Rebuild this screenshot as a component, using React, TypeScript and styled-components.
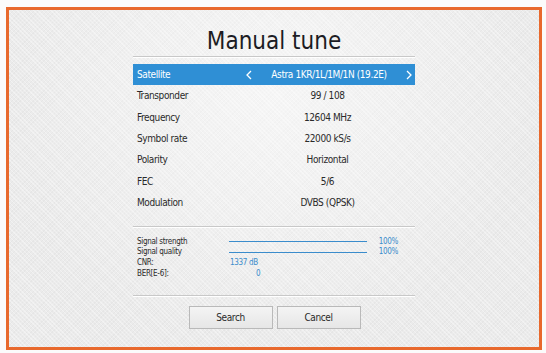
import React from 'react';
import styled, { createGlobalStyle } from 'styled-components';

const FONT = `"DejaVu Sans Condensed", "DejaVu Sans", sans-serif`;

const Global = createGlobalStyle`
  html, body { margin: 0; padding: 0; background: #fbfbfb; }
  body { width: 546px; height: 353px; overflow: hidden; font-family: ${FONT}; }
`;

const Page = styled.div`
  padding: 7px 0 0 6px;
`;

const Frame = styled.div`
  width: 536px;
  height: 343px;
  box-sizing: border-box;
  border: 3px solid #e8692d;
  background-color: #ebebeb;
  background-image:
    radial-gradient(ellipse at 50% 25%, rgba(255, 255, 255, 0.55), rgba(255, 255, 255, 0) 70%),
    repeating-linear-gradient(45deg, rgba(255, 255, 255, 0.35) 0 1px, rgba(255, 255, 255, 0) 1px 3px),
    repeating-linear-gradient(-45deg, rgba(0, 0, 0, 0.025) 0 1px, rgba(0, 0, 0, 0) 1px 3px);
  display: flex;
  flex-direction: column;
  align-items: center;
`;

const Panel = styled.div`
  width: 282px;
  display: flex;
  flex-direction: column;
`;

const Title = styled.h1`
  margin: 0;
  padding-top: 16px;
  height: 30px;
  line-height: 30px;
  font-size: 24px;
  font-weight: 400;
  text-align: center;
  color: #1c1c24;
  border-bottom: 1px solid #c8c8c8;
  box-shadow: 0 1px 0 #ffffff;
`;

const Rows = styled.div`
  margin-top: 7px;
  display: flex;
  flex-direction: column;
`;

const Row = styled.div<{ $selected?: boolean }>`
  display: grid;
  grid-template-columns: 107px 1fr;
  height: 21.33px;
  align-items: center;
  font-size: 10px;
  letter-spacing: -0.4px;
  color: ${(p) => (p.$selected ? '#ffffff' : '#2a2a2a')};
  background: ${(p) => (p.$selected ? '#2f8fd5' : 'transparent')};
`;

const Label = styled.span`
  padding-left: 4px;
`;

const Value = styled.span`
  text-align: center;
`;

const Selector = styled.div`
  display: flex;
  align-items: center;
  justify-content: space-between;
  padding: 0 3px 0 6px;
`;

const Divider = styled.div<{ $top: number }>`
  margin-top: ${(p) => p.$top}px;
  height: 1px;
  background: #c8c8c8;
  box-shadow: 0 1px 0 #ffffff;
`;

const Signals = styled.div`
  margin-top: 9px;
  display: grid;
  grid-template-columns: 96px 138px 1fr;
  grid-auto-rows: 10.7px;
  align-items: center;
  font-size: 8px;
  line-height: 10px;
  letter-spacing: -0.3px;
  color: #2a2a2a;
`;

const SigLabel = styled.span`
  padding-left: 4px;
  grid-column: 1;
`;

const Bar = styled.div`
  height: 1.5px;
  background: #3a8ccc;
`;

const Percent = styled.span`
  text-align: right;
  padding-right: 17px;
  color: #3a8ccc;
`;

const SigValue = styled.span<{ $indent: number }>`
  grid-column: 2 / span 2;
  padding-left: ${(p) => p.$indent}px;
  color: #3a8ccc;
`;

const Buttons = styled.div`
  margin-top: 10px;
  display: flex;
  justify-content: center;
  gap: 4px;
  padding-left: 1px;
`;

const Button = styled.button`
  width: 84px;
  height: 23px;
  box-sizing: border-box;
  border: 1px solid #b9b9b9;
  background: linear-gradient(#f4f4f4, #e6e6e6);
  font-family: ${FONT};
  font-size: 10px;
  letter-spacing: -0.4px;
  color: #2a2a2a;
  padding: 0;
`;

const Chevron = ({ dir }: { dir: 'left' | 'right' }) => (
  <svg width="6" height="10" viewBox="0 0 6 10">
    <polyline
      points={dir === 'left' ? '5,1 1,5 5,9' : '1,1 5,5 1,9'}
      fill="none"
      stroke="#ffffff"
      strokeWidth="1.3"
    />
  </svg>
);

const params: [string, string][] = [
  ['Transponder', '99 / 108'],
  ['Frequency', '12604 MHz'],
  ['Symbol rate', '22000 kS/s'],
  ['Polarity', 'Horizontal'],
  ['FEC', '5/6'],
  ['Modulation', 'DVBS (QPSK)'],
];

export default function App() {
  return (
    <>
      <Global />
      <Page>
        <Frame>
          <Panel>
            <Title>Manual tune</Title>
            <Rows>
              <Row $selected>
                <Label>Satellite</Label>
                <Selector>
                  <Chevron dir="left" />
                  <span>Astra 1KR/1L/1M/1N (19.2E)</span>
                  <Chevron dir="right" />
                </Selector>
              </Row>
              {params.map(([k, v]) => (
                <Row key={k}>
                  <Label>{k}</Label>
                  <Value>{v}</Value>
                </Row>
              ))}
            </Rows>
            <Divider $top={13} />
            <Signals>
              <SigLabel>Signal strength</SigLabel>
              <Bar />
              <Percent>100%</Percent>
              <SigLabel>Signal quality</SigLabel>
              <Bar />
              <Percent>100%</Percent>
              <SigLabel>CNR:</SigLabel>
              <SigValue $indent={1}>1337 dB</SigValue>
              <SigLabel>BER[E-6]:</SigLabel>
              <SigValue $indent={27}>0</SigValue>
            </Signals>
            <Divider $top={16} />
            <Buttons>
              <Button>Search</Button>
              <Button>Cancel</Button>
            </Buttons>
          </Panel>
        </Frame>
      </Page>
    </>
  );
}
